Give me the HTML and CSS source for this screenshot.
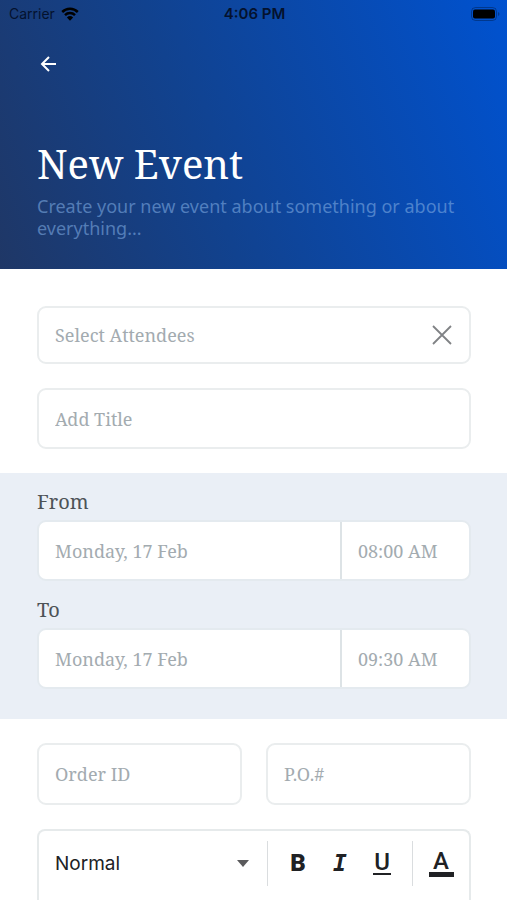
FILE: index.html
```html
<!DOCTYPE html>
<html lang="en">
<head>
<meta charset="utf-8">
<meta name="viewport" content="width=device-width, initial-scale=1">
<title>New Event</title>
<link rel="stylesheet" href="styles.css">
</head>
<body>
<header class="hero">
  <div class="status">
    <div class="carrier">
      <span>Carrier</span>
      <svg class="wifi" viewBox="0 0 18 14" aria-hidden="true">
        <path d="M1.2 5a11.2 11.2 0 0 1 15.6 0M4 8.1a7.1 7.1 0 0 1 10 0" fill="none" stroke="currentColor" stroke-width="2.5"/>
        <path d="M9 13.7 5.9 10.4a4.5 4.5 0 0 1 6.2 0z" fill="currentColor"/>
      </svg>
    </div>
    <span class="clock">4:06 PM</span>
    <svg class="battery" viewBox="0 0 30 14" aria-hidden="true">
      <rect x="1.500" y="0.5" width="25" height="13" rx="4" fill="none" stroke="currentColor" opacity="0.3"/>
      <rect x="3" y="2.500" width="22" height="9" rx="2" fill="currentColor"/>
      <path d="M28 5c2 .8 2 3.2 0 4z" fill="currentColor" opacity="0.3"/>
    </svg>
  </div>
  <button class="back" type="button" aria-label="Back">
    <svg viewBox="0 0 16 16" aria-hidden="true"><path d="M15.5 8H1.5M8.500 1 1.500 8l7 7" fill="none" stroke="currentColor" stroke-width="2"/></svg>
  </button>
  <h1 class="title">New Event</h1>
  <p class="subtitle">Create your new event about something or about everything...</p>
</header>

<form class="form">
  <section class="group">
    <div class="field field-clear">
      <input class="input" type="text" aria-label="Select Attendees" placeholder="Select Attendees">
      <button class="clear" type="button" aria-label="Clear attendees">
        <svg viewBox="0 0 20 20" aria-hidden="true"><path d="M1 1l18 18M19 1 1 19" fill="none" stroke="currentColor" stroke-width="1.800"/></svg>
      </button>
    </div>
    <div class="field">
      <input class="input" type="text" aria-label="Add Title" placeholder="Add Title">
    </div>
  </section>

  <section class="dates">
    <label class="label" for="from-date">From</label>
    <div class="field">
      <input class="input date" id="from-date" type="text" placeholder="Monday, 17 Feb">
      <input class="input time" type="text" aria-label="From time" placeholder="08:00 AM">
    </div>
    <label class="label" for="to-date">To</label>
    <div class="field">
      <input class="input date" id="to-date" type="text" placeholder="Monday, 17 Feb">
      <input class="input time" type="text" aria-label="To time" placeholder="09:30 AM">
    </div>
  </section>

  <section class="group details">
    <div class="pair">
      <div class="field"><input class="input" type="text" aria-label="Order ID" placeholder="Order ID"></div>
      <div class="field"><input class="input" type="text" aria-label="P.O.#" placeholder="P.O.#"></div>
    </div>
    <div class="editor">
      <div class="toolbar">
        <div class="style-box">
          <select class="style-select" aria-label="Text style"><option>Normal</option></select>
          <svg class="caret" viewBox="0 0 12 7" aria-hidden="true"><path d="M0 0h12L6 7z" fill="currentColor"/></svg>
        </div>
        <div class="tools">
          <button class="tool bold" type="button" aria-label="Bold">B</button>
          <button class="tool italic" type="button" aria-label="Italic">I</button>
          <button class="tool underline" type="button" aria-label="Underline">U</button>
        </div>
        <div class="color-box">
          <button class="tool color" type="button" aria-label="Text color">A</button>
        </div>
      </div>
      <textarea class="body-text" rows="1" aria-label="Description"></textarea>
    </div>
  </section>
</form>
</body>
</html>
```
FILE: styles.css
```css
* {
  box-sizing: border-box;
}

body {
  display: flex;
  flex-direction: column;
  height: 100vh;
  margin: 0;
  background: #fff;
  font-family: "Noto Serif", "DejaVu Serif Condensed", "DejaVu Serif", serif;
}

button,
input,
select,
textarea {
  margin: 0;
  padding: 0;
  border: 0;
  background: none;
  font: inherit;
  color: inherit;
}

svg {
  display: block;
}

.hero {
  flex: none;
  padding-bottom: 30px;
  background: linear-gradient(70deg, #1f3766 0%, #11428f 40%, #0052d0 100%);
  color: #fff;
}

.form {
  display: flex;
  flex: 1;
  flex-direction: column;
  min-height: 0;
}

.status {
  display: grid;
  grid-template-columns: 1fr auto 1fr;
  align-items: center;
  height: 27px;
  padding: 0 7px 0 9px;
  color: #04122e;
  font: 15px Inter, sans-serif;
}

.carrier {
  display: flex;
  align-items: center;
  gap: 6px;
  font-size: 14px;
}

.wifi {
  width: 18px;
  height: 14px;
  color: #000;
}

.clock {
  font-weight: 600;
}

.battery {
  width: 30px;
  height: 14px;
  justify-self: end;
  color: #000;
}

.back {
  display: flex;
  align-items: center;
  height: 48px;
  margin: 13px 0 0 40px;
}

.back svg {
  width: 17px;
  height: 16px;
}

.title {
  margin: 48px 36px 0 37px;
  font-size: 40px;
  line-height: 56px;
  font-weight: 400;
}

.subtitle {
  margin: 3px 36px 0 37px;
  color: rgba(125, 170, 225, 0.6);
  font: 18px/22px "Noto Sans", sans-serif;
}

.group {
  display: flex;
  flex-direction: column;
  gap: 24px;
  padding: 24px 36px 24px 37px;
}

.group:first-child {
  padding-top: 37px;
}

.details {
  flex: 1;
  min-height: 0;
  padding-bottom: 0;
}

.field {
  display: flex;
  flex: none;
  align-items: center;
  min-width: 0;
  height: 61px;
  border: 2px solid #eaedee;
  border-radius: 9px;
  background: #fff;
  overflow: hidden;
}

.field-clear {
  height: 58px;
}

.input {
  flex: 1;
  min-width: 0;
  height: 100%;
  padding: 0 16px;
  color: #4e5357;
  font-size: 18px;
}

.input::placeholder {
  color: #a3abb0;
  opacity: 1;
}

.clear {
  padding: 8px;
  margin-right: 9px;
  color: #808285;
}

.clear svg {
  width: 20px;
  height: 20px;
}

.dates {
  flex: none;
  padding: 14px 36px 30px 37px;
  background: #eaeff6;
}

.dates .field {
  border-color: #e4eaef;
}

.label {
  display: block;
  padding-bottom: 3px;
  color: #4e5357;
  font-size: 20px;
  line-height: 30px;
}

.dates .field + .label {
  margin-top: 14px;
}

.dates .time {
  flex: 0 0 30%;
  border-left: 2px solid #dde3e6;
}

.pair {
  display: grid;
  flex: none;
  grid-template-columns: 1fr 1fr;
  gap: 24px;
}

.pair .field {
  height: 62px;
}

.editor {
  display: flex;
  flex: 1;
  flex-direction: column;
  min-height: 0;
  border: 2px solid #e6eaeb;
  border-bottom: 0;
  border-radius: 8px 8px 0 0;
}

.toolbar {
  display: flex;
  flex: none;
  align-items: center;
  height: 64px;
  color: #202124;
}

.style-box {
  display: flex;
  flex: 1;
  align-items: center;
  min-width: 0;
  padding: 0 18px 0 16px;
}

.style-select {
  flex: 1;
  min-width: 0;
  height: 44px;
  appearance: none;
  font: 19px Inter, sans-serif;
}

.caret {
  width: 12px;
  height: 7px;
  color: #5a5a5c;
}

.tools,
.color-box {
  display: flex;
  align-items: center;
  height: 45px;
  border-left: 1px solid #dadddf;
}

.tools {
  gap: 24px;
  width: 145px;
  padding-left: 21px;
}

.color-box {
  justify-content: center;
  width: 55px;
}

.tools {
  margin-right: 0;
}

.tool {
  width: 18px;
  height: 28px;
  text-align: center;
  font: 500 24px/24px Roboto, sans-serif;
}

.tool.bold {
  font-weight: 900;
}

.tool.italic {
  font: italic 700 23px/24px "DejaVu Sans Mono", monospace;
}

.tool.underline {
  height: 24px;
  border-bottom: 2px solid currentColor;
  line-height: 22px;
}

.color-box {
  width: 57px;
}

.color {
  width: 25px;
  border-bottom: 5px solid currentColor;
}

.body-text {
  display: block;
  flex: 1;
  width: 100%;
  min-height: 0;
  padding: 0 16px;
  font-size: 18px;
  resize: none;
}
```
